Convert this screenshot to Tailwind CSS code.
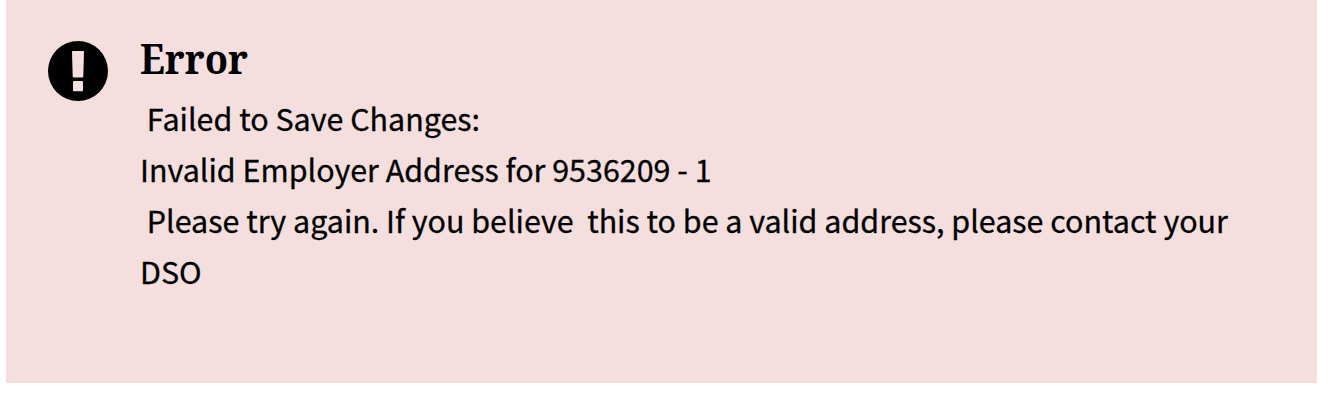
<!DOCTYPE html>
<html lang="en"><head><meta charset="utf-8"><title>Error</title>
<script src="https://cdn.jsdelivr.net/npm/@tailwindcss/browser@4"></script></head>
<body class="bg-white h-[412px] overflow-hidden">
<div role="alert" class="flex items-start ml-1.5 w-[1311px] h-[383px] bg-[#f4dfde] text-black pl-[42px]">
<svg class="mt-[41px] size-[60px] shrink-0" viewBox="0 0 60 60"><circle cx="30" cy="30" r="30" fill="#000"/><path fill="#f4dfde" d="M25 10h10q1.100 0 1 1l-.7 24.400q-.1 1-1.100 1h-8.400q-1 0-1.100-1l-.7-24.400q-.1-1 1-1zM26 40h8q1 0 1 1v8.300q0 1-1 1h-8q-1 0-1-1v-8.300q0-1 1-1z"/></svg>
<div class="ml-8 pt-8">
<h3 class="h-[61px] leading-[52px] font-bold text-[42.500px] whitespace-nowrap"><span class="inline-block origin-left scale-x-[0.895] font-['Noto_Serif','DejaVu_Serif',serif]">Error</span></h3>
<div class="font-['Noto_Sans_CJK_SC',sans-serif] text-[30.450px] leading-[51px] whitespace-pre [-webkit-text-stroke:0.3px_black]"><p> Failed to Save Changes:</p><p>Invalid Employer Address for 9536209 - 1</p><p> Please try again. If you believe  this to be a valid address, please contact your</p><p>DSO</p></div>
</div></div></body></html>
